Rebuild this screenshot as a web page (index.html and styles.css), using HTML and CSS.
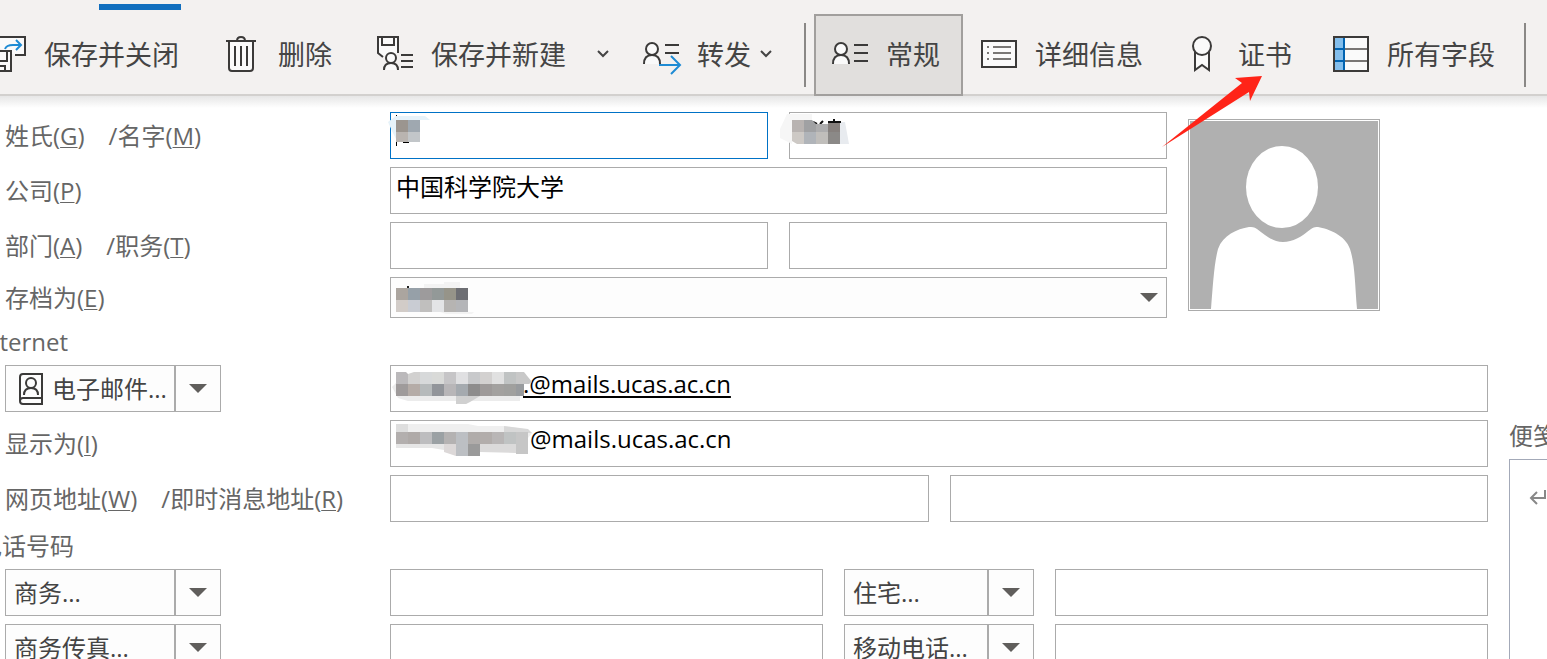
FILE: index.html
```html
<!DOCTYPE html>
<html lang="zh-CN">
<head>
    <meta charset="UTF-8">
    <meta name="viewport" content="width=device-width, initial-scale=1.0">
    <title>联系人</title>
    <link rel="stylesheet" href="styles.css">
</head>
<body>

    <header class="ribbon">
        <div class="tab-strip"><div class="tab-active"></div></div>
        <div class="toolbar">
            <div class="group actions">
                <button type="button" class="tool">
                    <svg class="icon" viewBox="0 0 36 36" fill="none" stroke="#3b3a39" stroke-width="2">
                        <path d="M9 12V1h26v18H25" fill="#fafafa"/>
                        <path d="M1 15h20v20H1z" fill="#fafafa"/>
                        <path d="M5 15v10h12V15M6 35v-5h9v5"/>
                        <path d="M15 13c1-3 4-4 8-4h8M26 4l5 5-5 5" stroke="#1e8bd4"/>
                    </svg>
                    <span>保存并关闭</span>
                </button>
                <button type="button" class="tool">
                    <svg class="icon" viewBox="0 0 36 36" fill="none" stroke="#3b3a39" stroke-width="2">
                        <path d="M5 5v27c0 2 1 3 3 3h18c2 0 3-1 3-3V5" fill="#fafafa"/>
                        <path d="M2 5h30M13 5c0-3 1-4 4-4s4 1 4 4M11 10v20M17 10v20M23 10v20"/>
                    </svg>
                    <span>删除</span>
                </button>
                <button type="button" class="tool split">
                    <svg class="icon" viewBox="0 0 36 36" fill="none" stroke="#3b3a39" stroke-width="2">
                        <path d="M6 21l-5-4V1h20v16" fill="#fafafa"/>
                        <path d="M5 1v8h12V1"/>
                        <circle cx="14" cy="22" r="5" fill="#fafafa"/>
                        <path d="M7 34c0-5 3-7 7-7s7 2 7 7" fill="#fafafa"/>
                        <path d="M24 19h12M24 25h12M24 31h12"/>
                    </svg>
                    <span>保存并新建</span>
                    <svg class="chevron" viewBox="0 0 12 8" fill="none" stroke="#444" stroke-width="2"><path d="M1 1l5 5 5-5"/></svg>
                </button>
                <button type="button" class="tool forward">
                    <svg class="icon" viewBox="0 0 36 36" fill="none" stroke="#3b3a39" stroke-width="2">
                        <circle cx="9" cy="13" r="6" fill="#fafafa"/>
                        <path d="M1 28c0-6 3-9 8-9s8 3 8 9" fill="#fafafa"/>
                        <path d="M22 9h14M22 17h14"/>
                        <path d="M16 29h21M28 20l9 9-9 9" stroke="#1e8bd4"/>
                    </svg>
                    <span>转发</span>
                    <svg class="chevron" viewBox="0 0 12 8" fill="none" stroke="#444" stroke-width="2"><path d="M1 1l5 5 5-5"/></svg>
                </button>
            </div>
            <div class="separator"></div>
            <div class="group">
                <button type="button" class="tool active">
                    <svg class="icon" viewBox="0 0 36 36" fill="none" stroke="#3b3a39" stroke-width="2">
                        <circle cx="9" cy="13" r="6" fill="#fafafa"/>
                        <path d="M1 28c0-6 3-9 8-9s8 3 8 9" fill="#fafafa"/>
                        <path d="M22 9h14M22 17h14M22 25h14"/>
                    </svg>
                    <span>常规</span>
                </button>
                <button type="button" class="tool">
                    <svg class="icon" viewBox="0 0 36 36" fill="none" stroke="#3b3a39" stroke-width="2">
                        <path d="M1 5h34v26H1z" fill="#fafafa"/>
                        <path d="M6 11h2M12 11h18M6 17h2M12 17h18M6 23h2M12 23h18" stroke="#797775"/>
                    </svg>
                    <span>详细信息</span>
                </button>
                <button type="button" class="tool">
                    <svg class="icon" viewBox="0 0 36 36" fill="none" stroke="#3b3a39" stroke-width="2">
                        <path d="M11 16v18l7-5 7 5V16" fill="#fafafa"/>
                        <circle cx="18" cy="10" r="9" fill="#fafafa"/>
                    </svg>
                    <span>证书</span>
                </button>
                <button type="button" class="tool">
                    <svg class="icon" viewBox="0 0 36 36" fill="none" stroke-width="2">
                        <path d="M1 1h34v34H1z" fill="#fafafa"/>
                        <path d="M1 1h10v34H1z" fill="#83beec"/>
                        <path d="M12 13h24M12 25h24" stroke="#797775"/>
                        <path d="M1 13h10M1 25h10M11 1v34" stroke="#0063b1"/>
                        <path d="M1 1h34v34H1z" stroke="#3b3a39"/>
                    </svg>
                    <span>所有字段</span>
                </button>
            </div>
            <div class="separator last"></div>
        </div>
    </header>

    <main class="content">
        <form class="contact">
            <section class="identity">
                <div class="rows">
                    <div class="row">
                        <div class="labels">
                            <label for="surname">姓氏(<u>G</u>)</label>
                            <label for="given">/名字(<u>M</u>)</label>
                        </div>
                        <div class="fields">
                            <div class="field">
                                <input type="text" id="surname" class="focused">
                                <svg class="mask" viewBox="0 0 48 36" width="48" height="36">
                                    <path d="M-2 10l8-6h29l5 4H6v19l-4-8z" fill="#e6f2f9"/>
                                    <path d="M6 3h1v1H6zM6 30h1v4H6zM13 30h6v1h-6z" fill="#000"/>
                                    <path d="M6 8h12v12H6z" fill="#9b958f"/>
                                    <path d="M18 8h12v12H18z" fill="#9fa8b0"/>
                                    <path d="M6 20h12v10H6z" fill="#b9b4b0"/>
                                    <path d="M18 20h12v10H18z" fill="#c2c6c9"/>
                                </svg>
                            </div>
                            <div class="field">
                                <input type="text" id="given">
                                <svg class="mask" viewBox="0 0 60 36" width="60" height="36">
                                    <path d="M-2 2h25v6H3v24l-12-6v-9z" fill="#f6f6f6"/>
                                    <path d="M51 10h5l4 22h-9z" fill="#e8ebef"/>
                                    <path d="M24 10l4 2M31 12l3-3M39 10h13M45 7v4" stroke="#111" stroke-width="2"/>
                                    <path d="M3 8h12v12H3z" fill="#b8b3b1"/>
                                    <path d="M15 8h8l4 4v8H15z" fill="#a0a1a3"/>
                                    <path d="M27 12h12v8H27z" fill="#adadae"/>
                                    <path d="M39 11h12v9H39z" fill="#86807d"/>
                                    <path d="M3 20h12v12H8l-5-3z" fill="#cdc9c5"/>
                                    <path d="M15 20h12v12H15z" fill="#b0b4b9"/>
                                    <path d="M27 20h12v12H27z" fill="#c0bebb"/>
                                    <path d="M39 20h12v12H39z" fill="#8b8987"/>
                                </svg>
                            </div>
                        </div>
                    </div>
                    <div class="row">
                        <div class="labels"><label for="company">公司(<u>P</u>)</label></div>
                        <div class="fields">
                            <div class="field"><input type="text" id="company" value="中国科学院大学"></div>
                        </div>
                    </div>
                    <div class="row">
                        <div class="labels">
                            <label for="department">部门(<u>A</u>)</label>
                            <label for="job">/职务(<u>T</u>)</label>
                        </div>
                        <div class="fields">
                            <div class="field"><input type="text" id="department"></div>
                            <div class="field"><input type="text" id="job"></div>
                        </div>
                    </div>
                    <div class="row short">
                        <div class="labels"><label for="fileas">存档为(<u>E</u>)</label></div>
                        <div class="fields">
                            <div class="field">
                                <select id="fileas"><option value=""></option></select>
                                <svg class="arrow" viewBox="0 0 18 9"><path d="M0 0h18L9 9z"/></svg>
                                <svg class="mask" viewBox="0 0 84 38" width="84" height="38">
                                    <path d="M34 7h20V5h16v6H34zM50 35h34l-2 2H56z" fill="#f3f3f3"/>
                                    <path d="M17 9h2v2h-2z" fill="#222"/>
                                    <path d="M6 11h12v12H6z" fill="#aba59f"/>
                                    <path d="M18 11h12v12H18z" fill="#96a0a8"/>
                                    <path d="M30 11h12v12H30z" fill="#9d9b9c"/>
                                    <path d="M42 11h12v12H42z" fill="#939998"/>
                                    <path d="M54 11h12v12H54z" fill="#969489"/>
                                    <path d="M66 11h12v12H66z" fill="#6d6e73"/>
                                    <path d="M6 23h12v12H6z" fill="#d2ccc8"/>
                                    <path d="M18 23h12v12H18z" fill="#c9ccd3"/>
                                    <path d="M30 23h12v12H30z" fill="#c0bfbe"/>
                                    <path d="M42 23h12v12H42z" fill="#e3e4e6"/>
                                    <path d="M54 23h12v12H54z" fill="#b6b4b2"/>
                                    <path d="M66 23h12v12H66z" fill="#b4b5b8"/>
                                </svg>
                            </div>
                        </div>
                    </div>
                </div>
                <div class="photo">
                    <svg viewBox="0 0 188 188">
                        <path d="M0 0h188v188H0z" fill="#b0b0b0"/>
                        <ellipse cx="92" cy="66" rx="36" ry="41" fill="#fff"/>
                        <path d="M21 188c2-24 3-45 7-60 5-14 19-20 31-22 3 0 5 0 8 2 9 7 16 13 26 13s18-5 28-13c3-2 5-2 7-2 11 2 27 8 32 22 5 15 5 36 7 60z" fill="#fff"/>
                    </svg>
                </div>
            </section>

            <h2 class="section-title">Internet</h2>
            <section class="rows">
                <div class="row">
                    <div class="labels">
                        <div class="combo">
                            <button type="button" class="combo-main">
                                <svg class="book" viewBox="0 0 24 32" fill="none" stroke="#3b3a39" stroke-width="2">
                                    <path d="M23 1H4C2 1 1 2 1 4v24c0 2 1 3 3 3h19zM23 25H4c-2 0-3 1-3 3"/>
                                    <circle cx="12" cy="10" r="5"/>
                                    <path d="M5 22c0-5 3-7 7-7s7 2 7 7"/>
                                </svg>
                                电子邮件...
                            </button>
                            <button type="button" class="combo-drop" aria-label="选择电子邮件">
                                <svg viewBox="0 0 18 9"><path d="M0 0h18L9 9z"/></svg>
                            </button>
                        </div>
                    </div>
                    <div class="fields">
                        <div class="field">
                            <input type="text" class="address linked" aria-label="电子邮件" value=".@mails.ucas.ac.cn">
                            <svg class="mask" viewBox="0 0 144 40" width="144" height="40">
                                <path d="M2 22l4-4h124v18H80l-4 3H66v-3H18l-10-3z" fill="#ececec"/>
                                <path d="M66 31h24l-10 6-4 2H66z" fill="#d0d0d0"/>
                                <path d="M6 7h10l2 2v10H6z" fill="#bbb9bb"/>
                                <path d="M18 9l6-2h6v12H18z" fill="#d2d1d0"/>
                                <path d="M30 7h12v12H30z" fill="#d7d9da"/>
                                <path d="M42 7h12v12H42z" fill="#d9dad8"/>
                                <path d="M54 7h12v12H54z" fill="#c6c5c7"/>
                                <path d="M66 7h12v12H66z" fill="#e0e0e2"/>
                                <path d="M78 7h12v12H78z" fill="#c8c9cb"/>
                                <path d="M90 7h12v12H90z" fill="#d3d1d0"/>
                                <path d="M102 7h12v12H102z" fill="#e1e1e1"/>
                                <path d="M114 7h12v12H114z" fill="#c0c3c3"/>
                                <path d="M126 7h8l8 10-3 2H126z" fill="#c8c8c8"/>
                                <path d="M6 19h12v12H6z" fill="#9f9b9b"/>
                                <path d="M18 19h12v12H18z" fill="#b5aca7"/>
                                <path d="M30 19h12v12H30z" fill="#b6babb"/>
                                <path d="M42 19h12v12H42z" fill="#92959a"/>
                                <path d="M54 19h12v12H54z" fill="#b8b6b8"/>
                                <path d="M66 19h12v12H66z" fill="#a5aaaf"/>
                                <path d="M78 19h12v12H78z" fill="#8d8c8c"/>
                                <path d="M90 19h12v12H90z" fill="#9e9a99"/>
                                <path d="M102 19h12v12H102z" fill="#a3a19f"/>
                                <path d="M114 19h12v12H114z" fill="#a0a09e"/>
                                <path d="M126 19h8v12h-8z" fill="#989b9e"/>
                            </svg>
                        </div>
                    </div>
                </div>
                <div class="row">
                    <div class="labels"><label for="displayas">显示为(<u>I</u>)</label></div>
                    <div class="fields">
                        <div class="field">
                            <input type="text" id="displayas" class="address" value="@mails.ucas.ac.cn">
                            <svg class="mask" viewBox="0 0 144 40" width="144" height="40">
                                <path d="M6 4h72l10 2h26l20 3 8 4-4 5H6z" fill="#efefef"/>
                                <path d="M6 4h12v8H6z" fill="#dedede"/>
                                <path d="M114 6l24 3 4 4H114z" fill="#d8d8d8"/>
                                <path d="M6 24h48v6l-12-2H6z" fill="#e6e6e6"/>
                                <path d="M54 24h12v12l-12-4z" fill="#dcd8d8"/>
                                <path d="M90 24h36v9l-36-1z" fill="#dbdada"/>
                                <path d="M6 12h12v12H6z" fill="#b3afae"/>
                                <path d="M18 12h12v12H18z" fill="#afaaa8"/>
                                <path d="M30 12h12v12H30z" fill="#bdbdbf"/>
                                <path d="M42 12h12v12H42z" fill="#9ba1a4"/>
                                <path d="M54 12h12v12H54z" fill="#b4b2b2"/>
                                <path d="M66 12h12v24H66z" fill="#bcbfc3"/>
                                <path d="M78 12h12v12H78z" fill="#b0acaa"/>
                                <path d="M78 24h12v12H78z" fill="#9a9a9a"/>
                                <path d="M90 12h12v12H90z" fill="#b2adab"/>
                                <path d="M102 12h12v12H102z" fill="#b9b6b6"/>
                                <path d="M114 12h12v12H114z" fill="#c0c3c3"/>
                                <path d="M126 12h12v22H126z" fill="#c6c6c6"/>
                            </svg>
                        </div>
                    </div>
                </div>
                <div class="row">
                    <div class="labels">
                        <label for="web">网页地址(<u>W</u>)</label>
                        <label for="im">/即时消息地址(<u>R</u>)</label>
                    </div>
                    <div class="fields">
                        <div class="field"><input type="text" id="web"></div>
                        <div class="field"><input type="text" id="im"></div>
                    </div>
                </div>
            </section>

            <h2 class="section-title">电话号码</h2>
            <section class="rows">
                <div class="row">
                    <div class="labels">
                        <div class="combo">
                            <button type="button" class="combo-main">商务...</button>
                            <button type="button" class="combo-drop" aria-label="选择商务电话">
                                <svg viewBox="0 0 18 9"><path d="M0 0h18L9 9z"/></svg>
                            </button>
                        </div>
                    </div>
                    <div class="fields">
                        <div class="field"><input type="text" aria-label="商务"></div>
                        <div class="combo narrow">
                            <button type="button" class="combo-main">住宅...</button>
                            <button type="button" class="combo-drop" aria-label="选择住宅电话">
                                <svg viewBox="0 0 18 9"><path d="M0 0h18L9 9z"/></svg>
                            </button>
                        </div>
                        <div class="field"><input type="text" aria-label="住宅"></div>
                    </div>
                </div>
                <div class="row">
                    <div class="labels">
                        <div class="combo">
                            <button type="button" class="combo-main">商务传真...</button>
                            <button type="button" class="combo-drop" aria-label="选择传真">
                                <svg viewBox="0 0 18 9"><path d="M0 0h18L9 9z"/></svg>
                            </button>
                        </div>
                    </div>
                    <div class="fields">
                        <div class="field"><input type="text" aria-label="商务传真"></div>
                        <div class="combo narrow">
                            <button type="button" class="combo-main">移动电话...</button>
                            <button type="button" class="combo-drop" aria-label="选择移动电话">
                                <svg viewBox="0 0 18 9"><path d="M0 0h18L9 9z"/></svg>
                            </button>
                        </div>
                        <div class="field"><input type="text" aria-label="移动电话"></div>
                    </div>
                </div>
            </section>
        </form>

        <aside class="notes">
            <label for="notes">便笺</label>
            <div class="notes-box">
                <textarea id="notes"></textarea>
                <svg class="return" viewBox="0 0 18 16" fill="none" stroke="#888" stroke-width="2"><path d="M16 0v8H2M8 2L2 8l6 6"/></svg>
            </div>
        </aside>
    </main>

    <svg class="pointer" viewBox="0 0 100 71"><path d="M0 71L80 7l-7-5 27-2-12 25-1-9z" fill="#ff2418"/></svg>

</body>
</html>
```
FILE: styles.css
```css
* {
    box-sizing: border-box;
}

html, body {
    height: 100%;
}

body {
    margin: 0;
    overflow: hidden;
    position: relative;
    display: flex;
    flex-direction: column;
    background: #fff;
    color: #666;
    font-family: "Open Sans", "Noto Sans CJK SC", sans-serif;
    font-size: 24px;
    line-height: 32px;
}

button, input, select, textarea {
    font: inherit;
    border-radius: 0;
    margin: 0;
}

svg {
    display: block;
    flex: none;
    overflow: visible;
}

/* ribbon */
.ribbon {
    flex: none;
    background: #f3f1f0;
    box-shadow: inset 0 -2px #d2d0ce;
}

.tab-strip {
    height: 14px;
    padding: 4px 0 4px 99px;
}

.tab-active {
    width: 82px;
    height: 6px;
    background: #106ebe;
}

.toolbar {
    display: flex;
    align-items: center;
    height: 82px;
    margin-left: -28px;
}

.group {
    display: flex;
    height: 100%;
}

.actions {
    gap: 4px;
}

.tool {
    display: flex;
    align-items: center;
    gap: 18px;
    padding: 0 21px 2px 16px;
    border: 2px solid transparent;
    background: none;
    color: #444;
    font-size: 27px;
    white-space: nowrap;
}

.tool span {
    padding-top: 2px;
}

.tool.active {
    background: #e1dfdd;
    border-color: #a19f9d;
}

.tool.split {
    padding-right: 10px;
}

.icon {
    width: 36px;
    height: 36px;
}

.chevron {
    width: 12px;
    height: 8px;
}

.split .chevron {
    margin-left: 13px;
}

.forward .chevron {
    margin-left: -9px;
}

.separator {
    width: 2px;
    height: 64px;
    margin: 0 8px 0 9px;
    background: #8a8886;
}

.separator.last {
    margin: 0 6px;
}

/* form */
.content {
    flex: 1;
    display: flex;
    gap: 21px;
    padding-top: 16px;
    background: linear-gradient(#e6e6e6, #fff 12px);
}

.contact {
    flex: 1;
    padding-left: 5px;
}

.identity {
    display: flex;
    gap: 21px;
    padding-right: 108px;
}

.rows {
    flex: 1;
    display: flex;
    flex-direction: column;
    gap: 8px;
}

.row {
    display: grid;
    grid-template-columns: 385px 1fr;
    height: 47px;
}

.row.short {
    height: 41px;
}

.labels {
    display: flex;
    align-items: center;
    gap: 24px;
    white-space: nowrap;
}

u {
    text-underline-offset: 2px;
    text-decoration-thickness: 1px;
}

.fields {
    display: flex;
    gap: 21px;
}

.field {
    flex: 1;
    position: relative;
}

.field input, .field select {
    width: 100%;
    height: 100%;
    padding: 0 5px 10px;
    border: 1px solid #ababab;
    outline: none;
    background: #fff;
    color: #000;
}

.field input.focused {
    border-color: #0072c6;
}

.field select {
    padding-bottom: 0;
    appearance: none;
    background: #fdfdfd;
}

.field input.address {
    padding-left: 139px;
}

.field input.linked {
    padding-left: 132px;
    text-decoration: underline 2px;
    text-underline-offset: 3px;
}

.mask {
    position: absolute;
    top: 0;
    left: 0;
    pointer-events: none;
}

.arrow {
    position: absolute;
    top: 16px;
    right: 9px;
    width: 18px;
    height: 9px;
    fill: #605e5c;
    pointer-events: none;
}

.photo {
    align-self: flex-start;
    width: 192px;
    height: 192px;
    margin-top: 7px;
    padding: 1px;
    border: 1px solid #ababab;
    background: #fff;
}

.section-title {
    height: 47px;
    margin: 0 0 0 -27px;
    font-size: 24px;
    font-weight: normal;
    line-height: 47px;
}

.combo {
    display: flex;
    width: 216px;
    height: 47px;
    border: 1px solid #ababab;
}

.combo.narrow {
    width: 190px;
}

.combo button {
    display: flex;
    align-items: center;
    border: 0;
    background: #fdfdfd;
    color: #444;
}

.combo .combo-main {
    flex: 1;
    min-width: 0;
    padding: 0 0 0 8px;
    white-space: nowrap;
}

.combo .combo-drop {
    flex: none;
    justify-content: center;
    width: 46px;
    padding: 0;
    border-left: 2px solid #ababab;
}

.combo-drop svg {
    width: 18px;
    height: 9px;
    fill: #605e5c;
}

.book {
    width: 24px;
    height: 32px;
    margin: 0 9px 0 5px;
}

/* notes */
.notes {
    display: flex;
    flex-direction: column;
    width: 38px;
    margin-top: 308px;
    overflow: hidden;
    white-space: nowrap;
}

.notes label {
    height: 39px;
}

.notes-box {
    flex: 1;
    position: relative;
    border: 1px solid #a3a9b8;
    border-right: 0;
    border-bottom: 0;
}

.notes-box textarea {
    width: 100%;
    height: 100%;
    border: 0;
    outline: none;
    resize: none;
    background: none;
}

.return {
    position: absolute;
    top: 30px;
    left: 19px;
    width: 18px;
    height: 16px;
}

/* red arrow over the certificate button */
.pointer {
    position: absolute;
    top: 76px;
    left: 1162px;
    width: 100px;
    height: 71px;
    pointer-events: none;
}
```
